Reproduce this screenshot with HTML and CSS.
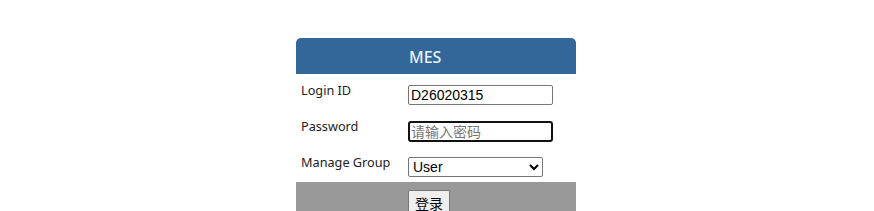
FILE: index.html
```html
<!DOCTYPE html>
<html lang="zh">
<head>
  <meta charset="UTF-8">
  <title>MES Login</title>
  <link rel="stylesheet" href="styles.css">
</head>
<body>
  <div class="login-box">
    <div class="login-header"><span class="title">MES</span></div>

    <div class="login-form">
      <div class="row">
        <label for="login-id">Login ID</label>
        <input id="login-id" type="text" class="field" value="D26020315">
      </div>
      <div class="row">
        <label for="password">Password</label>
        <input id="password" type="password" class="field active" placeholder="请输入密码">
      </div>
      <div class="row last">
        <label for="group">Manage Group</label>
        <select id="group" class="group-select">
          <option>User</option>
          <option>Admin</option>
        </select>
      </div>
    </div>

    <div class="login-footer">
      <button type="button" class="login-btn">登录</button>
    </div>
  </div>
</body>
</html>
```

FILE: styles.css
```css
body {
  margin: 0;
  padding-right: 2px;
  background-color: #fff;
  font-family: 'Noto Sans', 'Open Sans', sans-serif;
  color: #222;
}

.login-box {
  width: 280px;
  margin: 38px auto 0;
}

.login-header {
  height: 36px;
  background-color: #336699;
  border-radius: 5px 5px 0 0;
  padding-left: 113px;
}

.title {
  display: block;
  line-height: 38px;
  font-size: 16px;
  font-weight: 500;
  color: #e8f3ff;
}

.login-form {
  padding-top: 7px;
}

.row {
  display: flex;
  align-items: flex-start;
  height: 36px;
}

.row.last {
  height: 29px;
}

.row label {
  width: 107px;
  padding-left: 5px;
  font-size: 12.7px;
  line-height: 18px;
}

.field,
.group-select {
  margin: 4px 0 0;
  box-sizing: border-box;
  height: 20px;
  font-family: 'Liberation Sans', 'Noto Sans CJK SC', sans-serif;
  font-size: 14px;
  color: #000;
}

.field {
  width: 145px;
  padding: 0 2px;
  border: 1px solid #767676;
  border-radius: 2px;
}

.field.active {
  height: 21px;
  border: 2px solid #111;
  border-radius: 3px;
  padding: 0 1px;
}

.field::placeholder {
  color: #777;
}

.group-select {
  width: 135px;
  border: 1px solid #767676;
  border-radius: 2px;
  background-color: #fff;
}

.login-footer {
  background-color: #999;
  padding: 8px 0 0 112px;
  height: 21px;
  overflow: hidden;
}

.login-btn {
  font-family: 'Noto Sans CJK SC', sans-serif;
  font-size: 14px;
  padding: 1px 6px;
  background-color: #efefef;
  border: 1px solid #767676;
  border-radius: 2px;
  height: 26px;
}
```
